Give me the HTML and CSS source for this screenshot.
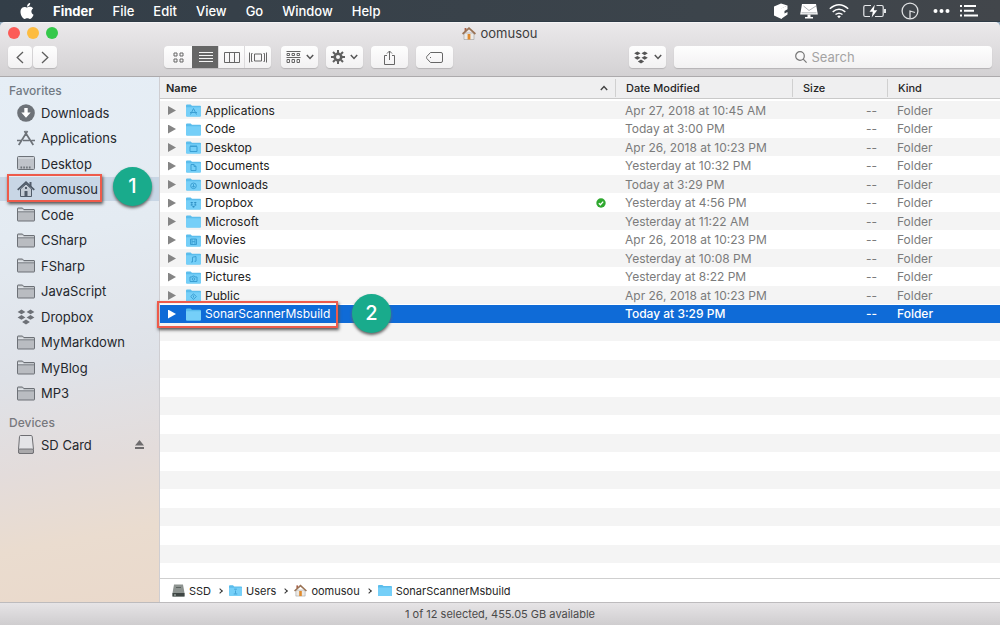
FILE: index.html
```html
<!DOCTYPE html>
<html lang="en">
<head>
<meta charset="utf-8">
<title>oomusou</title>
<link rel="stylesheet" href="styles.css">
</head>
<body>
<svg class="defs" aria-hidden="true">
  <symbol id="dropbox" viewBox="0 0 18 16"><path d="M4.500.500 8.400 2.900 4.500 5.300.600 2.900zM13.500.500l3.900 2.400-3.900 2.400-3.900-2.400zM4.500 6l3.900 2.400-3.900 2.400L.600 8.400zM13.500 6l3.900 2.400-3.900 2.400-3.900-2.400zM9 10.600l3.900 2.400L9 15.400 5.100 13z"/></symbol>
  <symbol id="chev" viewBox="0 0 8 6"><path d="M.8 1 4 4.500 7.200 1" fill="none" stroke="currentColor" stroke-width="1.500"/></symbol>
  <symbol id="side-folder" viewBox="0 0 18 15"><path d="M.500 13.500V1.500Q.500 1 1 1h4.500l1.200 1.500H17q.500 0 .500.500v10.500q0 .500-.500.500H1q-.500 0-.500-.500z" fill="#b9bcc1" stroke="#6d7177"/><path d="M1 2.500h4.700l1.200 1.300H17v1H1z" fill="#dfe3e8"/><path d="M1 4.800h16" fill="none" stroke="#6d7177" stroke-width=".9"/></symbol>
  <symbol id="folder" viewBox="0 0 15 13"><path d="M0 1.500Q0 .500 1 .500h3.600L6 1.800h8q1 0 1 1V11.500q0 1-1 1H1q-1 0-1-1z" fill="#5bbdec"/><path d="M0 3.200h15v8.300q0 1-1 1H1q-1 0-1-1z" fill="#75cff8"/></symbol>
  <symbol id="home" viewBox="0 0 14 13"><path d="M2 6h10v6.500H2z" fill="#eceae7" stroke="#8c8c8c" stroke-width=".5"/><path d="M2.600 1h1.800v3H2.600z" fill="#a8604a"/><path d="M.6 7 7 1.200 13.400 7" fill="none" stroke="#9a7355" stroke-width="1.700"/><path d="M5.600 7h2.800v5.500H5.600z" fill="#e08a2c"/></symbol>
</svg>

<nav class="menubar" aria-label="Menu bar">
  <svg class="apple" viewBox="0 0 24 24" fill="#fff"><path d="M12.152 6.896c-.948 0-2.415-1.078-3.960-1.040-2.040.027-3.910 1.183-4.961 3.014-2.117 3.675-.546 9.103 1.519 12.090 1.013 1.454 2.208 3.090 3.792 3.039 1.520-.065 2.090-.987 3.935-.987 1.831 0 2.350.987 3.960.948 1.637-.026 2.676-1.480 3.676-2.948 1.156-1.688 1.636-3.325 1.662-3.415-.039-.013-3.182-1.221-3.220-4.857-.026-3.040 2.480-4.494 2.597-4.559-1.429-2.090-3.623-2.324-4.390-2.376-2-.156-3.675 1.090-4.610 1.090zM15.530 3.830c.843-1.012 1.400-2.427 1.245-3.830-1.207.052-2.662.805-3.532 1.818-.780.896-1.454 2.338-1.273 3.714 1.338.104 2.715-.688 3.559-1.701"/></svg>
  <div class="menus">
    <button class="menu app">Finder</button><button class="menu">File</button><button class="menu">Edit</button><button class="menu">View</button><button class="menu">Go</button><button class="menu">Window</button><button class="menu">Help</button>
  </div>
  <div class="extras">
    <svg width="16" height="18" viewBox="0 0 16 18" fill="#fff"><path d="M1 4.500 8 1.500l6.500 2L8.500 6.500V17L1 13.500z"/><path d="M8 6.500 14.500 3.500v3.700L11.500 9v2.500l3-1.500v2.500L8 17z"/></svg>
    <svg width="20" height="18" viewBox="0 0 20 18"><path d="M3 2h14l1.800 10.500H1.200z" fill="#fff"/><path d="M4.500 4l5.500 4.500L17 4M2.500 10.800h15" stroke="#9a9fa3" stroke-width=".8" fill="none"/><path d="M8.500 12.500h3v2.500h2.500v1.500H6V15h2.500z" fill="#fff"/></svg>
    <svg width="20" height="16" viewBox="0 0 20 16" fill="none" stroke="#fff" stroke-width="1.500"><path d="M.8 5.800Q10-2.200 19.200 5.800M3.700 8.800q6.300-5.200 12.600 0M6.500 11.500q3.500-2.700 7 0"/><path d="M8.200 13.200q1.800-1.300 3.600 0L10 15.200z" fill="#fff" stroke="none"/></svg>
    <svg class="apart" width="24" height="14" viewBox="0 0 24 14" fill="none" stroke="#e6e8ea" stroke-width="1.200"><path d="M8 1.500H2.200Q.800 1.500.800 3v8q0 1.500 1.400 1.500H7M13.500 1.500h5.300q1.400 0 1.400 1.500v8q0 1.500-1.400 1.500H12"/><path d="M22 5v4" stroke-width="2"/><path d="M11.800.800 6.500 7.800h3.300L8.700 13.500l5.500-7.200h-3.400z" fill="#fff" stroke="none"/></svg>
    <svg class="apart" width="18" height="18" viewBox="0 0 18 18" fill="none" stroke="#dfe1e3" stroke-width="1.300"><circle cx="9" cy="9" r="7.900"/><path d="M9 16.500V9l5 1.500"/></svg>
    <svg class="apart" width="17" height="6" viewBox="0 0 17 6" fill="#fff"><circle cx="2.500" cy="3" r="2"/><circle cx="8.500" cy="3" r="2"/><circle cx="14.500" cy="3" r="2"/></svg>
    <svg width="18" height="12" viewBox="0 0 18 12" fill="#fff"><path d="M0 0h2v2H0zM4 0h12v2H4zM0 4.700h2v2H0zM4 4.700h10v2H4zM0 9.400h2v2H0zM4 9.400h14v2H4z"/></svg>
  </div>
</nav>

<main class="window">
  <header class="chrome">
    <div class="titlebar">
      <div class="lights"><button class="light close" aria-label="Close"></button><button class="light mini" aria-label="Minimize"></button><button class="light full" aria-label="Zoom"></button></div>
      <h1 class="title"><svg width="14" height="13"><use href="#home"/></svg>oomusou</h1>
    </div>
    <div class="toolbar">
      <div class="nav">
        <button class="tool" aria-label="Back"><svg width="8" height="13" viewBox="0 0 8 13" fill="none" stroke="#5d5d5d" stroke-width="1.300"><path d="M7 1 1.200 6.500 7 12"/></svg></button>
        <button class="tool" aria-label="Forward"><svg width="8" height="13" viewBox="0 0 8 13" fill="none" stroke="#5d5d5d" stroke-width="1.300"><path d="m1 1 5.800 5.500L1 12"/></svg></button>
      </div>
      <div class="views">
        <button class="view first" aria-label="Icon view"><svg width="11" height="11" viewBox="0 0 11 11" fill="none" stroke="#666"><path d="M1 1h3v3H1zM7 1h3v3H7zM1 7h3v3H1zM7 7h3v3H7z"/></svg></button>
        <button class="view on" aria-label="List view"><svg width="14" height="12" viewBox="0 0 14 12" stroke="#f4f4f4"><path d="M0 1.500h14M0 4.500h14M0 7.500h14M0 10.500h14"/></svg></button>
        <button class="view" aria-label="Column view"><svg width="16" height="11" viewBox="0 0 16 11" fill="none" stroke="#666"><path d="M.500.500h15v10H.500zM5.500.500v10M10.500.500v10"/></svg></button>
        <button class="view" aria-label="Gallery view"><svg width="18" height="11" viewBox="0 0 18 11" fill="none" stroke="#666"><path d="M.500.500v10M3.500 1.500h-1v8h1M5.500 2h7v7h-7zM14.500 1.500h1v8h-1M17.500.500v10"/></svg></button>
      </div>
      <button class="tool pick" aria-label="Arrange"><svg width="15" height="13" viewBox="0 0 15 13" fill="none" stroke="#666"><path d="M.500.500h14M.500 6.500h14M1 2.500h2.500v2H1zM6 2.500h2.500v2H6zM11 2.500h2.500v2H11zM1 8.500h2.500v3H1zM6 8.500h2.500v3H6zM11 8.500h2.500v3H11z"/></svg><svg width="8" height="6"><use href="#chev"/></svg></button>
      <button class="tool pick" aria-label="Action"><svg width="14" height="14" viewBox="0 0 14 14" fill="none" stroke="#5f5f5f"><circle cx="7" cy="7" r="3.300" stroke-width="2.600"/><path d="M7 0v3M7 11v3M0 7h3M11 7h3M2 2l2 2M10 10l2 2M12 2l-2 2M4 10l-2 2" stroke-width="2"/></svg><svg width="8" height="6"><use href="#chev"/></svg></button>
      <button class="tool pick" aria-label="Share"><svg width="13" height="15" viewBox="0 0 13 15" fill="none" stroke="#666"><path d="M4 5.500H1.500v9h10v-9H9M6.500 10V1M4 3.500 6.500 1 9 3.500"/></svg></button>
      <button class="tool pick" aria-label="Tags"><svg width="17" height="11" viewBox="0 0 17 11" fill="none" stroke="#666"><path d="M4.500.500h10.500q1.500 0 1.500 1.500v7q0 1.500-1.500 1.500H4.500L.800 6.500Q.300 5.500.800 4.500zM4 5.500h1"/></svg></button>
      <div class="gap"></div>
      <button class="tool pick" aria-label="Dropbox"><svg width="16" height="13" fill="#555"><use href="#dropbox"/></svg><svg width="8" height="6"><use href="#chev"/></svg></button>
      <label class="search"><svg width="12" height="12" viewBox="0 0 12 12" fill="none" stroke="#777" stroke-width="1.200"><circle cx="5" cy="5" r="4.300"/><path d="m8.200 8.200 3.400 3.400"/></svg><input type="text" placeholder="Search" aria-label="Search"></label>
    </div>
  </header>

  <div class="body">
    <aside class="sidebar">
      <h2>Favorites</h2>
      <ul>
        <li><a href="#"><svg width="18" height="18" viewBox="0 0 18 18"><circle cx="9" cy="9" r="8.800" fill="#6d7278"/><path d="M7.300 4h3.400v4.500h3L9 13.800 4.300 8.500h3z" fill="#fff"/></svg>Downloads</a></li>
        <li><a href="#"><svg width="18" height="16" viewBox="0 0 18 16" fill="none" stroke="#6d7278" stroke-width="1.700"><path d="M7.500 1 9 3.500M10.500 1 3 13l-1.300 2M9 3.500 15 13l1.300 2M0 10.500h4M6 10.500h6.500M14.500 10.500H18"/></svg>Applications</a></li>
        <li><a href="#"><svg width="18" height="15" viewBox="0 0 18 15"><rect x=".500" y=".500" width="17" height="13" rx="1" fill="#bfc3c9" stroke="#6d7278"/><path d="M1 2h16" stroke="#e1e5ea"/><path d="M3.500 11.500h11" stroke="#6d7278" stroke-width="1.800" stroke-dasharray="1.600 1.200"/></svg>Desktop</a></li>
        <li class="current"><a href="#"><svg width="18" height="16" viewBox="0 0 18 16"><path d="M3.500 8 9 3l5.500 5v7.500h-11z" fill="#c4ccd5" stroke="#505b68"/><path d="M12.500 1h2v5h-2z" fill="#505b68"/><path d="M.700 8.800 9 1.300l8.300 7.500" fill="none" stroke="#505b68" stroke-width="1.800"/><path d="M7.500 10h3v5.500h-3zM8 6h2v2H8z" fill="#505b68"/></svg>oomusou</a><span class="frame"></span><span class="step">1</span></li>
        <li><a href="#"><svg width="18" height="15"><use href="#side-folder"/></svg>Code</a></li>
        <li><a href="#"><svg width="18" height="15"><use href="#side-folder"/></svg>CSharp</a></li>
        <li><a href="#"><svg width="18" height="15"><use href="#side-folder"/></svg>FSharp</a></li>
        <li><a href="#"><svg width="18" height="15"><use href="#side-folder"/></svg>JavaScript</a></li>
        <li><a href="#"><svg width="18" height="16" fill="#6d7177"><use href="#dropbox"/></svg>Dropbox</a></li>
        <li><a href="#"><svg width="18" height="15"><use href="#side-folder"/></svg>MyMarkdown</a></li>
        <li><a href="#"><svg width="18" height="15"><use href="#side-folder"/></svg>MyBlog</a></li>
        <li><a href="#"><svg width="18" height="15"><use href="#side-folder"/></svg>MP3</a></li>
      </ul>
      <h2>Devices</h2>
      <ul>
        <li><a href="#"><svg width="18" height="19" viewBox="0 0 18 19"><path d="M3.500.500h10.500q1 0 1.200 1l1.300 13v2.500q0 1.500-1.500 1.500H3q-1.500 0-1.500-1.500V14.500L2.500 1.500q.1-1 1-1z" fill="#e4e4e7" stroke="#6e6e72"/><path d="M1.500 15q.3-1 1.500-1h12q1.200 0 1.500 1v2q0 1.500-1.500 1.500H3q-1.500 0-1.500-1.500z" fill="#aaa9ab" stroke="#6e6e72" stroke-width=".9"/></svg>SD Card</a><button class="eject" aria-label="Eject"><svg width="9" height="9" viewBox="0 0 9 9" fill="#6e6c6e"><path d="M4.500 0 9 5.500H0zM0 7h9v2H0z"/></svg></button></li>
      </ul>
    </aside>

    <section class="content">
      <div class="list">
        <table>
          <colgroup><col><col class="c-date"><col class="c-size"><col class="c-kind"></colgroup>
          <thead><tr><th class="sorted"><button>Name<svg width="8" height="6" viewBox="0 0 8 6" fill="none" stroke="#444" stroke-width="1.400"><path d="M.800 5 4 1.500 7.200 5"/></svg></button></th><th>Date Modified</th><th>Size</th><th>Kind</th></tr></thead>
          <tbody>
            <tr><td><div class="name"><button aria-label="Expand"></button><svg width="15" height="13"><use href="#folder"/><path d="M7.500 4.500 4.500 10.500M7.500 4.500l3 6M4 8.500h7" class="g"/></svg>Applications</div></td><td>Apr 27, 2018 at 10:45 AM</td><td>--</td><td>Folder</td></tr>
            <tr><td><div class="name"><button aria-label="Expand"></button><svg width="15" height="13"><use href="#folder"/></svg>Code</div></td><td>Today at 3:00 PM</td><td>--</td><td>Folder</td></tr>
            <tr><td><div class="name"><button aria-label="Expand"></button><svg width="15" height="13"><use href="#folder"/><path d="M4 5.500h7v5H4zM4 5h7" class="g"/></svg>Desktop</div></td><td>Apr 26, 2018 at 10:23 PM</td><td>--</td><td>Folder</td></tr>
            <tr><td><div class="name"><button aria-label="Expand"></button><svg width="15" height="13"><use href="#folder"/><path d="M5 4.500h3l2 2v4H5zM8 4.500v2h2" class="g"/></svg>Documents</div></td><td>Yesterday at 10:32 PM</td><td>--</td><td>Folder</td></tr>
            <tr><td><div class="name"><button aria-label="Expand"></button><svg width="15" height="13"><use href="#folder"/><circle cx="7.500" cy="7.800" r="2.800" class="g"/><path d="M7.500 6v3M6.300 8l1.200 1.300L8.700 8" class="g"/></svg>Downloads</div></td><td>Today at 3:29 PM</td><td>--</td><td>Folder</td></tr>
            <tr><td><div class="name"><button aria-label="Expand"></button><svg width="15" height="13"><use href="#folder"/><use href="#dropbox" x="4" y="4.500" width="7" height="6.500" fill="#2f8fc4"/></svg>Dropbox<svg class="synced" width="10" height="10" viewBox="0 0 10 10"><circle cx="5" cy="5" r="4.700" fill="#2fa82f"/><path d="M2.800 5.200 4.400 6.700 7.200 3.600" fill="none" stroke="#fff" stroke-width="1.300"/></svg></div></td><td>Yesterday at 4:56 PM</td><td>--</td><td>Folder</td></tr>
            <tr><td><div class="name"><button aria-label="Expand"></button><svg width="15" height="13"><use href="#folder"/></svg>Microsoft</div></td><td>Yesterday at 11:22 AM</td><td>--</td><td>Folder</td></tr>
            <tr><td><div class="name"><button aria-label="Expand"></button><svg width="15" height="13"><use href="#folder"/><path d="M4.500 5h6v5.500h-6zM6 5v5.500M9 5v5.500M6 7.700h3" class="g"/></svg>Movies</div></td><td>Apr 26, 2018 at 10:23 PM</td><td>--</td><td>Folder</td></tr>
            <tr><td><div class="name"><button aria-label="Expand"></button><svg width="15" height="13"><use href="#folder"/><path d="M6.500 10V5.200l3.500-.7v4.700M5 10h1.500M8.500 9.300H10" class="g"/></svg>Music</div></td><td>Yesterday at 10:08 PM</td><td>--</td><td>Folder</td></tr>
            <tr><td><div class="name"><button aria-label="Expand"></button><svg width="15" height="13"><use href="#folder"/><path d="M4 6h2l.7-1h1.600L9 6h2v4.500H4z" class="g"/><circle cx="7.500" cy="8" r="1.300" class="g"/></svg>Pictures</div></td><td>Yesterday at 8:22 PM</td><td>--</td><td>Folder</td></tr>
            <tr><td><div class="name"><button aria-label="Expand"></button><svg width="15" height="13"><use href="#folder"/><path d="M7.500 4.800 10.300 7.600 7.500 10.400 4.700 7.600zM7.500 6.500v2" class="g"/></svg>Public</div></td><td>Apr 26, 2018 at 10:23 PM</td><td>--</td><td>Folder</td></tr>
            <tr class="selected"><td><div class="name"><button aria-label="Expand"></button><svg width="15" height="13"><use href="#folder"/></svg>SonarScannerMsbuild<span class="frame"></span><span class="step">2</span></div></td><td>Today at 3:29 PM</td><td>--</td><td>Folder</td></tr>
          </tbody>
        </table>
      </div>
      <nav class="path" aria-label="Path">
        <a href="#"><svg width="13" height="13" viewBox="0 0 13 13"><path d="M2 .500h9L12.500 9v3.500H.500V9z" fill="#8d9390"/><path d="M.500 9h12v3.500H.500z" fill="#3f4644"/><path d="M4 3.500h5" stroke="#5b625f"/><path d="M2 11h2" stroke="#b8c4be"/></svg>SSD</a><i></i>
        <a href="#"><svg width="13" height="13" viewBox="0 0 15 13"><use href="#folder" width="15" height="13"/><path d="M5.500 10.500h4M7.500 10V6.500M6 5h3" class="g"/></svg>Users</a><i></i>
        <a href="#"><svg width="13" height="13"><use href="#home"/></svg>oomusou</a><i></i>
        <a href="#"><svg width="14" height="13"><use href="#folder"/></svg>SonarScannerMsbuild</a>
      </nav>
    </section>
  </div>
  <footer class="status">1 of 12 selected, 455.05 GB available</footer>
</main>
</body>
</html>
```

FILE: styles.css
```css
* { box-sizing: border-box; }

body {
  margin: 0;
  min-height: 100vh;
  display: flex;
  flex-direction: column;
  background: #8fa6bb;
  font: 12px/18px Inter, "Liberation Sans", sans-serif;
  color: #262626;
}

button {
  margin: 0;
  padding: 0;
  border: 0;
  background: none;
  font: inherit;
  color: inherit;
}

a { color: inherit; text-decoration: none; }
svg { flex: none; display: block; }
.defs { position: absolute; width: 0; height: 0; }
.g { fill: none; stroke: #3b9fd3; stroke-width: 1; }

/* Menu bar */
.menubar {
  display: flex;
  align-items: center;
  height: 22px;
  padding: 0 22px 0 19px;
  background: linear-gradient(90deg, #333e48, #3c444b 70%, #42464b);
  border-bottom: 1px solid #2f3b46;
  color: #fff;
  font-size: 13px;
}
.apple { width: 16px; height: 16px; margin-right: 18px; }
.menus { display: flex; gap: 19px; }
.menu { font-weight: 500; line-height: 20px; }
.app { font-weight: 700; }
.extras { display: flex; align-items: center; gap: 10px; margin-left: auto; }
.apart { margin-left: 4px; }

/* Window */
.window { flex: 1; display: flex; flex-direction: column; }
.chrome {
  padding: 0 8px 8px;
  background: linear-gradient(#ebe9eb, #d3d1d3);
  border-top: 1px solid #f5f4f5;
  border-bottom: 1px solid #acaaac;
  border-radius: 5px 5px 0 0;
}
.titlebar {
  display: grid;
  grid-template-columns: 1fr auto 1fr;
  align-items: center;
  height: 20px;
}
.lights { display: flex; gap: 7px; }
.light { width: 12px; height: 12px; border-radius: 50%; }
.close { background: #fc5b57; }
.mini { background: #fdbc40; }
.full { background: #34c84a; }
.title {
  display: flex;
  align-items: center;
  gap: 4px;
  margin: 0;
  font-size: 13px;
  font-weight: 400;
  color: #3d3d3d;
}
.toolbar { display: flex; align-items: center; gap: 8px; padding-top: 3px; }
.nav { display: flex; gap: 1px; margin-right: 99px; }
.tool, .view, .search {
  display: flex;
  align-items: center;
  justify-content: center;
  height: 22px;
  background: linear-gradient(#fefefe, #f2f1f2);
  color: #555;
}
.tool, .search { border-radius: 4px; box-shadow: 0 1px 1px #b5b3b5; }
.tool { width: 24px; }
.pick { width: 37px; gap: 5px; }
.views {
  display: flex;
  margin-right: 2px;
  border-radius: 4px;
  overflow: hidden;
  box-shadow: 0 1px 1px #b5b3b5;
}
.view { width: 26px; border-left: 1px solid #dcdadc; }
.first { width: 28px; border-left: 0; }
.on { background: #666; border-color: #666; }
.view:last-child { width: 27px; }
.gap { flex: 160; }
.search { flex: 318; gap: 5px; }
.search input {
  width: 60px;
  flex: none;
  padding: 0;
  border: 0;
  outline: 0;
  background: none;
  font: inherit;
  font-size: 13px;
}
.search input::placeholder { color: #a3a3a3; opacity: 1; }

.body { flex: 1; display: flex; }

/* Sidebar */
.sidebar {
  flex: none;
  width: 160px;
  border-right: 1px solid #cfced2;
  background: linear-gradient(170deg, #e6eef6 0%, #e4ebf2 30%, #dfe2e8 55%, #e3dcdb 72%, #eadccf 86%, #ead9cb 100%);
}
.sidebar h2 {
  margin: 0;
  padding: 5px 9px 0;
  font-size: 12px;
  font-weight: 500;
  color: #727a83;
}
.sidebar ul { margin: 0; padding: 0; list-style: none; }
.sidebar ul + h2 { padding: 8px 9px 0; color: #77787d; }
.sidebar li { position: relative; display: flex; align-items: center; height: 25px; }
.sidebar li:nth-child(even) { height: 26px; }
.sidebar a {
  flex: 1;
  display: flex;
  align-items: center;
  gap: 6px;
  height: 24px;
  padding-left: 17px;
  font-size: 13px;
  color: #25282d;
}
.current a { background: #c8d6e5; }
.eject { margin-right: 15px; }

/* Numbered callouts */
.frame { position: absolute; border: 2px solid #ee5b4b; box-shadow: 1px 2px 3px #555; }
.step {
  position: absolute;
  z-index: 1;
  width: 39px;
  height: 39px;
  border-radius: 50%;
  background: #19ab8c;
  box-shadow: 0 2px 3px #666;
  color: #fff;
  font-size: 20px;
  font-weight: 500;
  line-height: 39px;
  text-align: center;
}
.current .frame { left: 7px; top: -2px; width: 95px; height: 28px; }
.current .step { left: 113px; top: -9px; }
.selected .frame { left: -3px; top: -4px; width: 181px; height: 27px; }
.selected .step { left: 192px; top: -11px; }

/* File list */
.content { flex: 1; display: flex; flex-direction: column; background: #fff; }
.list {
  flex: 1;
  background: repeating-linear-gradient(#f4f4f4 0 18px, #fff 18px 37px) 0 24px no-repeat;
}
table { width: 100%; table-layout: fixed; border-spacing: 0; }
.c-date { width: 177px; }
.c-size { width: 95px; }
.c-kind { width: 113px; }
th {
  height: 22px;
  padding: 0 0 0 11px;
  border-bottom: 1px solid #c9c9c9;
  background: linear-gradient(#d0d0d0, #d0d0d0) 0 2px / 1px 18px no-repeat #efeff0;
  font-size: 11px;
  font-weight: 500;
  line-height: 18px;
  text-align: left;
}
th.sorted { padding: 0 7px 0 6px; background: #efeff0; }
th button { display: flex; align-items: center; justify-content: space-between; width: 100%; font-weight: 600; }
tbody::before { content: ""; display: block; height: 2px; }
td { height: 18px; padding: 0 0 0 10px; color: #7b7b7b; white-space: nowrap; }
tr:nth-child(odd) td { height: 19px; }
td:first-child { padding: 0; color: #222; }
td:nth-child(3) { padding: 0 10px 0 0; text-align: right; }
.name { position: relative; display: flex; align-items: center; height: 18px; }
.name button {
  width: 8px;
  height: 9px;
  margin: 0 10px 0 8px;
  background: #858585;
  clip-path: polygon(0 0, 100% 50%, 0 100%);
}
.name svg { margin-right: 4px; }
.name .synced { margin: 0 9px 0 auto; }
.selected td, .selected td:first-child { background: #0f6bd7; color: #fff; }
.selected td + td { font-weight: 500; }
.selected .name button { background: #fff; }

/* Path and status bars */
.path {
  display: flex;
  align-items: center;
  gap: 7px;
  height: 24px;
  padding-left: 12px;
  border-top: 1px solid #cfcfcf;
  font-size: 11px;
}
.path a { display: flex; align-items: center; gap: 4px; }
.path i {
  width: 4px;
  height: 4px;
  border: solid #333;
  border-width: 1px 1px 0 0;
  transform: rotate(45deg);
}
.status {
  height: 23px;
  border-top: 1px solid #bdbbbd;
  background: linear-gradient(#e6e4e6, #cfcdcf);
  color: #4a4a4a;
  font-size: 11px;
  line-height: 22px;
  text-align: center;
}
```
